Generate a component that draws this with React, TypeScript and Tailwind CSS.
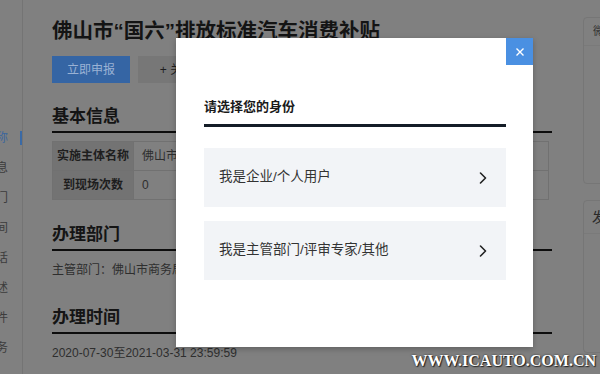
import React from "react";

const sideItems = [
  { id: 1, label: "事项名称", active: true },
  { id: 2, label: "基本信息" },
  { id: 3, label: "办理部门" },
  { id: 4, label: "办理时间" },
  { id: 5, label: "咨询电话" },
  { id: 6, label: "政策概述" },
  { id: 7, label: "相关附件" },
  { id: 8, label: "在线服务" },
];

const options = [
  { id: 1, text: "我是企业/个人用户" },
  { id: 2, text: "我是主管部门/评审专家/其他" },
];

const Heading = ({ children }: { children: React.ReactNode }) => (
  <h2 className="border-b-2 border-[#0d0d0d] pb-[2px] text-[17px] font-bold leading-[24px] text-[#141414]">
    {children}
  </h2>
);

const Chevron = () => (
  <svg width="8" height="12" viewBox="0 0 8 12" fill="none">
    <path d="M1.5 1 L6.5 6 L1.5 11" stroke="#222" strokeWidth="1.6" strokeLinecap="round" strokeLinejoin="round" />
  </svg>
);

export default function App() {
  return (
    <div className="relative h-screen w-full overflow-hidden bg-[#808080] font-['Liberation_Sans','Noto_Sans_CJK_SC',sans-serif]">
      <div className="flex h-full">
        {/* side nav */}
        <div className="w-[23px] shrink-0 overflow-hidden border-r border-[#747474] pt-[123px]">
          {sideItems.map(({ id, label, active }) => (
            <div key={id} className="flex h-[30px] items-center justify-end gap-[12px] whitespace-nowrap text-[12px]">
              <span className={active ? "text-[#3a669e]" : "text-[#3c3c3c]"}>{label}</span>
              <span className={`h-[14px] w-[2px] shrink-0 ${active ? "bg-[#3a6aa6]" : "bg-transparent"}`} />
            </div>
          ))}
        </div>

        {/* main */}
        <div className="w-[500px] shrink-0 ml-[29px] pt-[17px]">
          <h1 className="whitespace-nowrap text-[20.5px] font-bold leading-[28px] text-[#141414]">
            佛山市“国六”排放标准汽车消费补贴
          </h1>
          <div className="mt-[11px] flex gap-[8px]">
            <button className="h-[27px] w-[78px] bg-[#3565a4] text-[12px] text-[#9ab2d4]">立即申报</button>
            <button className="h-[27px] w-[78px] bg-[#777777] text-[12px] text-[#1e1e1e]">+ 关注</button>
          </div>

          <div className="mt-[22px]">
            <Heading>基本信息</Heading>
            <table className="mt-2 w-[497px] border-collapse text-[12px]">
              <tbody>
                <tr className="h-[29px]">
                  <td className="w-[81px] border border-[#717171] bg-[#737373] text-center font-bold text-[#1e1e1e]">实施主体名称</td>
                  <td className="border border-[#717171] pl-[8px] text-[#2e2e2e]">佛山市商务局</td>
                </tr>
                <tr className="h-[29px]">
                  <td className="border border-[#717171] bg-[#737373] text-center font-bold text-[#1e1e1e]">到现场次数</td>
                  <td className="border border-[#717171] pl-[8px] text-[#2e2e2e]">0</td>
                </tr>
              </tbody>
            </table>
          </div>

          <div className="mt-[23px]">
            <Heading>办理部门</Heading>
            <p className="mt-[9px] text-[12px] leading-[20px] text-[#2e2e2e]">主管部门：佛山市商务局</p>
          </div>

          <div className="mt-[26px]">
            <Heading>办理时间</Heading>
            <p className="mt-[9px] text-[12px] leading-[20px] text-[#2e2e2e]">2020-07-30至2021-03-31 23:59:59</p>
          </div>
        </div>

        {/* right column */}
        <div className="ml-[31px] flex w-[160px] shrink-0 flex-col gap-[16px] pt-[17px]">
          <div className="h-[167px] rounded-sm border border-[#767676]">
            <div className="flex h-[28px] items-center border-b border-[#7a7a7a] pl-[9px] text-[11px] text-[#333]">微信扫码办理</div>
          </div>
          <div className="h-[153px] rounded-sm border border-[#767676]">
            <div className="flex h-[33px] items-center border-b border-[#7a7a7a] pl-[8px] text-[14px] text-[#2a2a2a]">发布机构</div>
          </div>
        </div>
      </div>

      {/* dialog */}
      <div className="absolute left-[176px] top-[38px] h-[309px] w-[357px] bg-white px-[28px] pt-[59px] shadow-[0_2px_6px_rgba(0,0,0,0.25)]">
        <button className="absolute right-0 top-0 flex h-[27px] w-[27px] items-center justify-center bg-[#4a90e2]">
          <svg width="8" height="8" viewBox="0 0 8 8">
            <path d="M0.5 0.5 L7.5 7.5 M7.5 0.5 L0.5 7.5" stroke="#fff" strokeWidth="1.4" />
          </svg>
        </button>
        <div className="w-[302px]">
          <h3 className="border-b-[3px] border-[#141d27] pb-[7px] text-[13px] font-bold leading-[20px] text-[#1a1a1a]">
            请选择您的身份
          </h3>
          <div className="mt-[21px] flex flex-col gap-[14px]">
            {options.map(({ id, text }) => (
              <div key={id} className="flex h-[59px] cursor-pointer items-center justify-between bg-[#f2f4f7] pl-[15px] pr-[19px]">
                <span className="text-[13.5px] text-[#333]">{text}</span>
                <Chevron />
              </div>
            ))}
          </div>
        </div>
      </div>

      {/* watermark */}
      <div className="absolute bottom-[3px] right-[4px] font-['Liberation_Serif',serif] text-[16px] font-bold leading-[20px] text-white [text-shadow:0_0_2px_#222,1px_1px_1px_#222]">
        WWW.ICAUTO.COM.CN
      </div>
    </div>
  );
}
